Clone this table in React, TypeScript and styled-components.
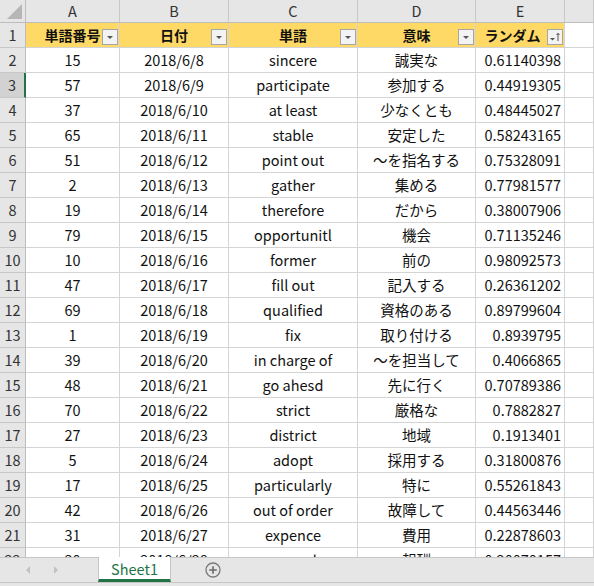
import React from "react";
import styled, { createGlobalStyle } from "styled-components";

const GlobalStyle = createGlobalStyle`
  html, body { margin: 0; padding: 0; background: #ffffff; }
  body { font-family: "Noto Sans CJK JP", "Noto Sans", sans-serif; }
  * { box-sizing: border-box; }
`;

const Window = styled.div`
  width: 594px;
  height: 586px;
  display: flex;
  flex-direction: column;
  overflow: hidden;
  background: #ffffff;
`;

const Sheet = styled.div`
  height: 557px;
  flex: none;
  overflow: hidden;
  display: grid;
  grid-template-columns: 26px 94px 109px 129px 118px 89px 1fr;
  grid-template-rows: 23px repeat(22, 25px);
`;

const Corner = styled.div`
  position: relative;
  background: #e6e6e6;
  border-right: 1px solid #bdbdbd;
  border-bottom: 1px solid #bdbdbd;
  &::after {
    content: "";
    position: absolute;
    right: 3px;
    bottom: 3px;
    width: 0;
    height: 0;
    border-left: 15px solid transparent;
    border-bottom: 15px solid #b6b6b6;
  }
`;

const ColHeader = styled.div`
  background: #e6e6e6;
  border-right: 1px solid #c8c8c8;
  border-bottom: 1px solid #bdbdbd;
  display: flex;
  align-items: center;
  justify-content: center;
  font-family: "Noto Sans CJK JP", sans-serif;
  font-size: 14.5px;
  color: #333333;
  line-height: 1;
  padding-top: 1px;
`;

const RowHeader = styled.div<{ $selected?: boolean }>`
  background: ${(p) => (p.$selected ? "#d2d2d2" : "#e6e6e6")};
  border-right: ${(p) => (p.$selected ? "2px solid #217346" : "1px solid #bdbdbd")};
  border-bottom: 1px solid #c8c8c8;
  display: flex;
  align-items: center;
  justify-content: center;
  font-size: 14.5px;
  color: #333333;
  line-height: 1;
`;

const Cell = styled.div<{ $align?: "center" | "right"; $head?: boolean; $avoidButton?: boolean }>`
  position: relative;
  background: ${(p) => (p.$head ? "#ffd966" : "#ffffff")};
  border-right: 1px solid #d4d4d4;
  border-bottom: 1px solid #d4d4d4;
  display: flex;
  align-items: center;
  justify-content: ${(p) => (p.$align === "right" ? "flex-end" : "center")};
  padding: 0 ${(p) => (p.$avoidButton ? "18px" : "3px")} 0 3px;
  font-size: ${(p) => (p.$head ? "14px" : "14.5px")};
  font-weight: ${(p) => (p.$head ? 700 : 400)};
  color: #111111;
  white-space: nowrap;
  line-height: 1;
`;

const FilterButton = styled.div`
  position: absolute;
  right: 1px;
  bottom: 2px;
  width: 16px;
  height: 16px;
  background: #f3f3f3;
  border: 1px solid #a6a6a6;
  display: flex;
  align-items: center;
  justify-content: center;
`;

const TabBar = styled.div`
  flex: 1;
  background: #e6e6e6;
  border-top: 1px solid #c6c6c6;
  display: flex;
  flex-direction: column;
`;

const TabRow = styled.div`
  height: 25px;
  display: flex;
  align-items: stretch;
  border-bottom: 1px solid #c6c6c6;
`;

const NavArrows = styled.div`
  width: 98px;
  display: flex;
  align-items: center;
  padding-left: 24px;
  gap: 20px;
`;

const Tab = styled.div`
  width: 73px;
  margin-top: -1px;
  background: #ffffff;
  border-left: 1px solid #c6c6c6;
  border-right: 1px solid #c6c6c6;
  border-bottom: 3px solid #217346;
  display: flex;
  align-items: center;
  justify-content: center;
  color: #217346;
  font-size: 14.5px;
  line-height: 1;
  padding-top: 2px;
`;

const AddSheet = styled.div`
  width: 30px;
  margin-left: 27px;
  display: flex;
  align-items: center;
  justify-content: center;
`;

type Row = [string, string, string, string, string];

const rows: Row[] = [
  ["15", "2018/6/8", "sincere", "誠実な", "0.61140398"],
  ["57", "2018/6/9", "participate", "参加する", "0.44919305"],
  ["37", "2018/6/10", "at least", "少なくとも", "0.48445027"],
  ["65", "2018/6/11", "stable", "安定した", "0.58243165"],
  ["51", "2018/6/12", "point out", "～を指名する", "0.75328091"],
  ["2", "2018/6/13", "gather", "集める", "0.77981577"],
  ["19", "2018/6/14", "therefore", "だから", "0.38007906"],
  ["79", "2018/6/15", "opportunitl", "機会", "0.71135246"],
  ["10", "2018/6/16", "former", "前の", "0.98092573"],
  ["47", "2018/6/17", "fill out", "記入する", "0.26361202"],
  ["69", "2018/6/18", "qualified", "資格のある", "0.89799604"],
  ["1", "2018/6/19", "fix", "取り付ける", "0.8939795"],
  ["39", "2018/6/20", "in charge of", "～を担当して", "0.4066865"],
  ["48", "2018/6/21", "go ahesd", "先に行く", "0.70789386"],
  ["70", "2018/6/22", "strict", "厳格な", "0.7882827"],
  ["27", "2018/6/23", "district", "地域", "0.1913401"],
  ["5", "2018/6/24", "adopt", "採用する", "0.31800876"],
  ["17", "2018/6/25", "particularly", "特に", "0.55261843"],
  ["42", "2018/6/26", "out of order", "故障して", "0.44563446"],
  ["31", "2018/6/27", "expence", "費用", "0.22878603"],
  ["30", "2018/6/28", "reward", "報酬", "0.20070157"],
];

const headers = ["単語番号", "日付", "単語", "意味", "ランダム"];

const DropIcon = () => (
  <svg width="10" height="10" viewBox="0 0 10 10">
    <path d="M2 4 L8 4 L5 7 Z" fill="#555" />
  </svg>
);

const SortIcon = () => (
  <svg width="12" height="12" viewBox="0 0 12 12">
    <path d="M1 7 L6 7 L3.5 9.5 Z" fill="#555" />
    <path d="M9 10 L9 2.5 M7.5 4 L9 2.2 L10.5 4" stroke="#555" strokeWidth="1" fill="none" />
  </svg>
);

export default function App() {
  return (
    <>
      <GlobalStyle />
      <Window>
        <Sheet>
          <Corner />
          {["A", "B", "C", "D", "E", "F"].map((c) => (
            <ColHeader key={c}>{c === "F" ? "" : c}</ColHeader>
          ))}
          <RowHeader>1</RowHeader>
          {headers.map((h, i) => (
            <Cell key={h} $head $avoidButton={i === 4}>
              {h}
              <FilterButton>{i === 4 ? <SortIcon /> : <DropIcon />}</FilterButton>
            </Cell>
          ))}
          <Cell />
          {rows.map((r, idx) => (
            <React.Fragment key={idx}>
              <RowHeader $selected={idx === 1}>{idx + 2}</RowHeader>
              <Cell>{r[0]}</Cell>
              <Cell>{r[1]}</Cell>
              <Cell>{r[2]}</Cell>
              <Cell>{r[3]}</Cell>
              <Cell $align="right">{r[4]}</Cell>
              <Cell />
            </React.Fragment>
          ))}
        </Sheet>
        <TabBar>
          <TabRow>
            <NavArrows>
              <svg width="8" height="10" viewBox="0 0 8 10">
                <path d="M6 1 L2 5 L6 9 Z" fill="#c2c2c2" />
              </svg>
              <svg width="8" height="10" viewBox="0 0 8 10">
                <path d="M2 1 L6 5 L2 9 Z" fill="#c2c2c2" />
              </svg>
            </NavArrows>
            <Tab>Sheet1</Tab>
            <AddSheet>
              <svg width="16" height="16" viewBox="0 0 16 16">
                <circle cx="8" cy="8" r="7" fill="none" stroke="#7a7a7a" strokeWidth="1.3" />
                <path d="M8 4.2 V11.8 M4.2 8 H11.8" stroke="#6a6a6a" strokeWidth="1.6" />
              </svg>
            </AddSheet>
          </TabRow>
        </TabBar>
      </Window>
    </>
  );
}
